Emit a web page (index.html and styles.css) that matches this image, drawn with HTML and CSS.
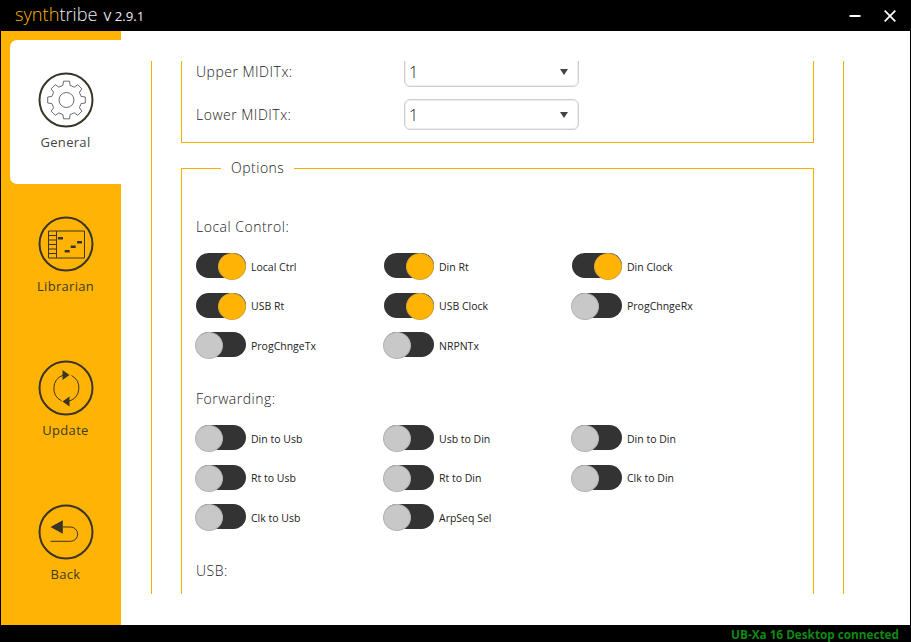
FILE: index.html
```html
<!DOCTYPE html>
<html lang="en">
<head>
<meta charset="utf-8">
<title>synthtribe</title>
<link rel="stylesheet" href="styles.css">
</head>
<body>
<div class="app">
  <header class="titlebar">
    <div class="brand"><span class="synth">synth</span><span class="tribe">tribe</span><span class="version">V 2.9.1</span></div>
    <div class="winctl">
      <svg class="winbtn" viewBox="0 0 12 12"><path d="M0.5 6h11" stroke="#fff" stroke-width="2"/></svg>
      <svg class="winbtn" viewBox="0 0 12 12"><path d="M0.7 0.7l10.6 10.6M11.3 0.7L0.7 11.3" stroke="#fff" stroke-width="1.7" fill="none"/></svg>
    </div>
  </header>
  <div class="main">
    <nav class="sidebar">
      <div class="navitem active">
        <svg class="navicon" viewBox="-28 -28 56 56"><circle r="26.5" class="ring"/><g transform="translate(0.5,0)"><polygon class="gear" points="-3.6,-14.6 -3,-18.8 3,-18.8 3.6,-14.6 7.73,-12.86 11.17,-15.37 15.37,-11.17 12.86,-7.73 14.6,-3.6 18.8,-3 18.8,3 14.6,3.6 12.86,7.73 15.37,11.17 11.17,15.37 7.73,12.86 3.6,14.6 3,18.8 -3,18.8 -3.6,14.6 -7.73,12.86 -11.17,15.37 -15.37,11.17 -12.86,7.73 -14.6,3.6 -18.8,3 -18.8,-3 -14.6,-3.6 -12.86,-7.73 -15.37,-11.17 -11.17,-15.37 -7.73,-12.86"/><circle r="7.5" class="gear"/></g></svg>
        <span>General</span>
      </div>
      <div class="navitem">
        <svg class="navicon" viewBox="-28 -28 56 56"><circle r="26.5" class="ring"/><path class="thin" d="M-17.5-13H18.5V14H-17.5ZM-9.5-13V14M-17.5-8.5H-9.5M-17.5-4H-9.5M-17.5 0.5H-9.5M-17.5 5H-9.5M-17.5 9.5H-9.5"/><path class="solid" d="M-8-7H-3V-4.5H-8ZM4.7 1.5H9.7V4H4.7ZM11-3H16V-0.5H11ZM-1.3 6H3.7V8.5H-1.3Z"/></svg>
        <span>Librarian</span>
      </div>
      <div class="navitem">
        <svg class="navicon" viewBox="-28 -28 56 56"><circle r="26.5" class="ring"/><path class="thin" d="M-3-12.8A14 14 0 0 0-4.5 12.8M5.5-12.5A14 14 0 0 1 3 13.2"/><path class="solid" d="M-3.5-18L3.5-13-3.5-8ZM3.5 8.5L-3.5 13.5 3.5 18.5Z"/></svg>
        <span>Update</span>
      </div>
      <div class="navitem">
        <svg class="navicon" viewBox="-28 -28 56 56"><circle r="26.5" class="ring"/><path class="thin" d="M-3-5H4.500A7.150 7.150 0 0 1 4.500 9.300H-15.500"/><path class="solid" d="M-15.500-5L-3.200-11.700V1.700Z"/></svg>
        <span>Back</span>
      </div>
    </nav>
    <section class="content">
      <div class="viewport">
        <div class="frame midi">
          <div class="formrow"><span class="formlabel">Upper MIDITx:</span><div class="select"><span>1</span><i class="caret"></i></div></div>
          <div class="formrow"><span class="formlabel">Lower MIDITx:</span><div class="select"><span>1</span><i class="caret"></i></div></div>
        </div>
        <fieldset class="frame options">
          <legend>Options</legend>
          <h3 class="heading first">Local Control:</h3>
          <div class="toggles">
            <div class="toggle on"><i class="track"></i><span>Local Ctrl</span></div>
            <div class="toggle on"><i class="track"></i><span>Din Rt</span></div>
            <div class="toggle on"><i class="track"></i><span>Din Clock</span></div>
            <div class="toggle on"><i class="track"></i><span>USB Rt</span></div>
            <div class="toggle on"><i class="track"></i><span>USB Clock</span></div>
            <div class="toggle"><i class="track"></i><span>ProgChngeRx</span></div>
            <div class="toggle"><i class="track"></i><span>ProgChngeTx</span></div>
            <div class="toggle"><i class="track"></i><span>NRPNTx</span></div>
          </div>
          <h3 class="heading">Forwarding:</h3>
          <div class="toggles">
            <div class="toggle"><i class="track"></i><span>Din to Usb</span></div>
            <div class="toggle"><i class="track"></i><span>Usb to Din</span></div>
            <div class="toggle"><i class="track"></i><span>Din to Din</span></div>
            <div class="toggle"><i class="track"></i><span>Rt to Usb</span></div>
            <div class="toggle"><i class="track"></i><span>Rt to Din</span></div>
            <div class="toggle"><i class="track"></i><span>Clk to Din</span></div>
            <div class="toggle"><i class="track"></i><span>Clk to Usb</span></div>
            <div class="toggle"><i class="track"></i><span>ArpSeq Sel</span></div>
          </div>
          <h3 class="heading">USB:</h3>
        </fieldset>
      </div>
    </section>
  </div>
  <footer class="status">UB-Xa 16 Desktop connected</footer>
</div>
</body>
</html>
```
FILE: styles.css
```css
* { box-sizing: border-box; }
html, body { margin: 0; padding: 0; height: 100%; }
body { background: #000; font-family: "Open Sans", sans-serif; color: #333; overflow: hidden; }
.app { width: 911px; height: 642px; display: flex; flex-direction: column; }

.titlebar { height: 31px; flex: none; display: flex; align-items: center; justify-content: space-between; padding: 0 15px; }
.brand { display: flex; align-items: baseline; font-size: 18.2px; font-weight: 300; line-height: 31px; }
.synth { color: #ffb405; }
.tribe { color: #eee; }
.version { color: #eee; font-size: 13.2px; font-weight: 400; margin-left: 6px; }
.winctl { display: flex; gap: 23px; align-items: center; margin-top: 1px; }
.winbtn { width: 12px; height: 12px; display: block; }

.main { flex: 1; min-height: 0; display: flex; margin: 0 1px; background: #fff; }
.sidebar { width: 120px; flex: none; background: #ffb405; padding-top: 9px; }
.navitem { height: 144px; margin-left: 9px; padding-top: 32px; display: flex; flex-direction: column; align-items: center; gap: 5px; font-size: 13px; letter-spacing: 0.3px; line-height: 20px; font-weight: 400; color: #403a2a; }
.navitem.active { background: #fff; border-radius: 7px 0 0 7px; color: #444; }
.navicon { width: 56px; height: 56px; display: block; }
.navitem span { margin-top: -1px; }
.ring { fill: none; stroke: #3a3428; stroke-width: 2; }
.gear { fill: none; stroke: #6a6a6a; stroke-width: 1; stroke-linejoin: round; }
.thin { fill: none; stroke: #3a3428; stroke-width: 1; }
.solid { fill: #3a3428; stroke: none; }

.content { flex: 1; min-width: 0; padding: 30px 66px 31px 30px; }
.viewport { height: 100%; width: 693px; border-left: 1px solid #f7b000; border-right: 1px solid #f7b000; padding: 0 29px; overflow: hidden; }

.frame { border: 1px solid #f7b000; margin: 0; }
.midi { display: flow-root; border-top: 0; height: 82px; padding: 0 14px; }
.formrow { display: flex; align-items: center; height: 31px; margin-top: 12px; }
.formrow:first-child { margin-top: -5px; }
.formlabel { width: 208px; font-size: 14px; font-weight: 300; letter-spacing: 0.5px; color: #222; }
.select { width: 175px; height: 31px; border: 1px solid #cfcfcf; border-radius: 6px; box-shadow: inset 0 0 0 1px #eee; display: flex; align-items: center; justify-content: space-between; padding: 0 10px 0 4px; font-size: 16px; font-weight: 300; color: #111; }
.caret { width: 0; height: 0; border-left: 4px solid transparent; border-right: 4px solid transparent; border-top: 6px solid #444; }

.options { margin-top: 15px; padding: 0 14px; height: 500px; }
.options legend { margin-left: 25px; padding: 0 10px; font-size: 14px; font-weight: 300; letter-spacing: 0.5px; line-height: 20px; color: #222; }
.heading { margin: 32px 0 16px; font-size: 14px; font-weight: 300; letter-spacing: 0.5px; line-height: 20px; color: #222; }
.heading.first { margin-top: 39px; margin-bottom: 16px; }

.toggles { display: grid; grid-template-columns: repeat(3, 188px); row-gap: 14.5px; }
.toggle { display: flex; align-items: center; gap: 5px; height: 25px; font-size: 10.5px; color: #222; }
.toggle span { padding-top: 2px; }
.track { width: 50px; height: 25px; border-radius: 13px; background: #333; position: relative; display: block; flex: none; }
.track::after { content: ""; position: absolute; top: 0; left: -1px; width: 26px; height: 25px; border-radius: 50%; background: #c8c8c8; border: 1px solid #b5b5b5; }
.toggle.on .track::after { left: auto; right: 0; background: #ffb405; border-color: #dba62e; }

.status { height: 17px; flex: none; text-align: right; padding-right: 12px; font-size: 11.75px; line-height: 19px; font-weight: 700; color: #0d8a12; overflow: hidden; }
```
